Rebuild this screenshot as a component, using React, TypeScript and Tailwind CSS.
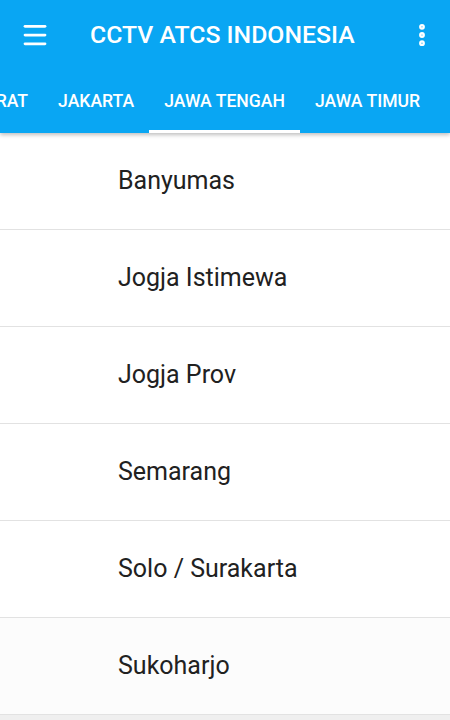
import { EllipsisVertical, Menu } from 'lucide-react';

const tabs = ['JAWA BARAT', 'JAKARTA', 'JAWA TENGAH', 'JAWA TIMUR'];
const cities = ['Banyumas', 'Jogja Istimewa', 'Jogja Prov', 'Semarang', 'Solo / Surakarta', 'Sukoharjo'];

const App = () => {
  return (
    <div className="w-[450px] h-[720px] overflow-hidden bg-[#efefef] flex flex-col font-['Roboto',sans-serif]">
      <header className="bg-[#09a6f3] shadow-[0_2px_4px_rgba(0,0,0,0.25)] z-10">
        <div className="h-[70px] flex items-center px-[20px] text-white">
          <Menu size={30} strokeWidth={2.2} />
          <h1 className="ml-[40px] flex-1 text-[24.8px] font-medium">CCTV ATCS INDONESIA</h1>
          <EllipsisVertical size={28} strokeWidth={3} className="-mr-[6px]" />
        </div>
        <div className="h-[63px] overflow-hidden">
          <div className="flex h-full -ml-[94px]">
            {tabs.map((t) => (
              <div
                key={t}
                className={`shrink-0 px-[15px] h-full flex items-center pt-[3px] text-[17.6px] font-medium text-white whitespace-nowrap border-b-[3px] ${
                  t === 'JAWA TENGAH' ? 'border-white' : 'border-transparent'
                }`}
              >
                {t}
              </div>
            ))}
          </div>
        </div>
      </header>
      <ul className="bg-white">
        {cities.map((c, i) => (
          <li
            key={c}
            className={`h-[97px] flex items-center pl-[118px] text-[25px] text-[#212121] border-b border-[#e2e2e2] ${
              i === cities.length - 1 ? 'bg-[#fcfcfc]' : ''
            }`}
          >
            {c}
          </li>
        ))}
      </ul>
    </div>
  );
};

export default App;
